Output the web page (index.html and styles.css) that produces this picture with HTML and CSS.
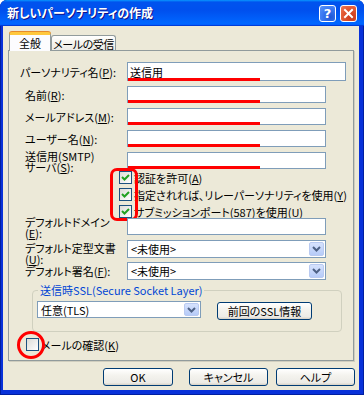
FILE: index.html
```html
<!DOCTYPE html>
<html lang="ja">
<head>
<meta charset="utf-8">
<title>新しいパーソナリティの作成</title>
<link rel="stylesheet" href="styles.css">
</head>
<body>
<div class="window">
  <div class="titlebar">
    <span class="title">新しいパーソナリティの作成</span>
    <span class="tb-btn tb-help">?</span>
    <span class="tb-btn tb-close"><svg width="11" height="11" viewBox="0 0 11 11"><path d="M2 2 L9 9 M9 2 L2 9" stroke="#fff" stroke-width="2" stroke-linecap="square"/></svg></span>
  </div>
  <div class="client">
    <div class="tabs">
      <div class="tab tab-active">全般</div>
      <div class="tab">メールの受信</div>
    </div>
    <div class="panel">
      <div class="row row-1">
        <span class="lbl lbl-first">パーソナリティ名(<u>P</u>):</span>
        <div class="field field-wide"><span class="val">送信用</span><span class="mark"></span></div>
      </div>
      <div class="row row-n">
        <span class="lbl">名前(<u>R</u>):</span>
        <div class="field"><span class="mark"></span></div>
      </div>
      <div class="row row-n">
        <span class="lbl">メールアドレス(<u>M</u>):</span>
        <div class="field"><span class="mark"></span></div>
      </div>
      <div class="row row-n">
        <span class="lbl">ユーザー名(<u>N</u>):</span>
        <div class="field"><span class="mark"></span></div>
      </div>
      <div class="row row-n">
        <span class="lbl lbl-2 lbl-up">送信用(SMTP)<br>サーバ(<u>S</u>):</span>
        <div class="field"><span class="mark"></span></div>
      </div>
      <div class="checks">
        <div class="check"><span class="cb"><svg width="11" height="11" viewBox="0 0 11 11"><polyline points="2,5 4.5,7.5 9,3" fill="none" stroke="#21A121" stroke-width="2"/></svg></span><span>認証を許可(<u>A</u>)</span></div>
        <div class="check"><span class="cb"><svg width="11" height="11" viewBox="0 0 11 11"><polyline points="2,5 4.5,7.5 9,3" fill="none" stroke="#21A121" stroke-width="2"/></svg></span><span>指定されれば、リレーパーソナリティを使用(<u>Y</u>)</span></div>
        <div class="check"><span class="cb"><svg width="11" height="11" viewBox="0 0 11 11"><polyline points="2,5 4.5,7.5 9,3" fill="none" stroke="#21A121" stroke-width="2"/></svg></span><span>サブミッションポート(587)を使用(<u>U</u>)</span></div>
        <span class="redbox"></span>
      </div>
      <div class="row row-dom">
        <span class="lbl lbl-2">デフォルトドメイン<br>(<u>E</u>):</span>
        <div class="field"></div>
      </div>
      <div class="row row-sel1">
        <span class="lbl lbl-2 lbl-down">デフォルト定型文書<br>(<u>U</u>):</span>
        <div class="field select"><span class="val">&lt;未使用&gt;</span><span class="arrow"><svg width="9" height="6" viewBox="0 0 9 6"><polyline points="1,1 4.5,4.5 8,1" fill="none" stroke="#4D6185" stroke-width="2"/></svg></span></div>
      </div>
      <div class="row row-sel2">
        <span class="lbl">デフォルト署名(<u>F</u>):</span>
        <div class="field select"><span class="val">&lt;未使用&gt;</span><span class="arrow"><svg width="9" height="6" viewBox="0 0 9 6"><polyline points="1,1 4.5,4.5 8,1" fill="none" stroke="#4D6185" stroke-width="2"/></svg></span></div>
      </div>
      <fieldset class="group">
        <legend>送信時SSL(Secure Socket Layer)</legend>
        <div class="group-row">
          <div class="field select select-ssl"><span class="val">任意(TLS)</span><span class="arrow"><svg width="9" height="6" viewBox="0 0 9 6"><polyline points="1,1 4.5,4.5 8,1" fill="none" stroke="#4D6185" stroke-width="2"/></svg></span></div>
          <span class="btn btn-ssl">前回のSSL情報</span>
        </div>
      </fieldset>
      <div class="check check-mail"><span class="cb"></span><span>メールの確認(<u>K</u>)</span><span class="redcircle"></span></div>
    </div>
    <div class="buttons">
      <span class="btn btn-ok">OK</span>
      <span class="btn btn-cancel">キャンセル</span>
      <span class="btn btn-help">ヘルプ</span>
    </div>
  </div>
</div>
</body>
</html>
```
FILE: styles.css
```css
* { box-sizing: border-box; }
html, body { margin: 0; padding: 0; }
body {
  width: 364px;
  height: 395px;
  overflow: hidden;
  background: #fff;
  font-family: "Noto Sans CJK JP", "Noto Sans", sans-serif;
  font-size: 11px;
  line-height: 12px;
  font-feature-settings: "palt";
  color: #000;
}
u { text-decoration: underline; text-underline-offset: 1px; }

.window {
  width: 364px;
  height: 395px;
  background: #0831D9;
  border-radius: 7px 7px 0 0;
  display: flex;
  flex-direction: column;
  box-shadow: inset 0 0 0 1px #001EA0;
}
.titlebar {
  height: 26px;
  flex: none;
  display: flex;
  align-items: center;
  padding: 0 7px 0 7px;
  border-radius: 7px 7px 0 0;
  background: linear-gradient(180deg, #0997ff, #0053ee 8%, #0050ee 40%, #0066ff 88%, #0066ff 93%, #005bff 95%, #003dd7 96%, #003dd7);
}
.title {
  flex: 1;
  color: #fff;
  font-weight: bold;
  font-size: 12px;
  text-shadow: 1px 1px #0F1089;
}
.tb-btn {
  width: 17px;
  height: 17px;
  border: 1px solid #fff;
  border-radius: 3px;
  display: flex;
  align-items: center;
  justify-content: center;
  color: #fff;
  font-family: "DejaVu Sans", sans-serif;
  font-weight: bold;
  font-size: 13px;
  line-height: 15px;
}
.tb-help {
  background: radial-gradient(circle at 70% 75%, #1F56D6, #3D7CF4 60%, #5C95F8);
  margin-right: 4px;
}
.tb-close {
  background: radial-gradient(circle at 70% 75%, #C9371A, #E35A33 60%, #EE7A58);
}

.client {
  flex: 1;
  margin: 0 5px 5px 3px;
  background: #ECE9D8;
  padding: 6px 5px 0 5px;
  display: flex;
  flex-direction: column;
}
.tabs {
  display: flex;
  align-items: flex-end;
  height: 18px;
  margin-left: 1px;
}
.tab {
  height: 15px;
  width: 65px;
  border: 1px solid #919B9C;
  border-bottom: none;
  border-radius: 3px 3px 0 0;
  background: linear-gradient(#FFFFFF, #F3F2EC 60%, #ECEBE6);
  display: flex;
  align-items: center;
  justify-content: center;
  padding-top: 1px;
  white-space: nowrap;
  letter-spacing: -0.4px;
  overflow: hidden;
}
.tab-active {
  position: relative;
  z-index: 1;
  width: 42px;
  height: 19px;
  margin-bottom: -1px;
  background: #FCFCFE;
  border-top: 3px solid #FFC83C;
  box-shadow: 0 -1px 0 #E68B2C;
  padding-top: 0;
  letter-spacing: 0;
}

.panel {
  height: 311px;
  border: 1px solid #919B9C;
  box-shadow: 1px 1px 0 #D0CEBF;
  background: #ECE9D8;
  display: flex;
  flex-direction: column;
  padding-left: 16px;
}
.row {
  display: flex;
  align-items: center;
  height: 17px;
}
.row-1 { margin-top: 11px; height: 19px; }
.row-n { margin-top: 5px; }
.row-dom { margin-top: 0; align-items: flex-start; }
.row-sel1 { margin-top: 5px; height: 18px; align-items: flex-start; }
.row-sel2 { margin-top: 4px; height: 18px; }

.lbl {
  width: 102px;
  flex: none;
  white-space: nowrap;
}
.lbl-first { width: 107px; margin-left: -5px; }
.lbl-2 { line-height: 11px; align-self: flex-start; margin-top: -1px; }
.lbl-up { margin-top: -1px; }
.lbl-down { margin-top: 3px; }

.field {
  position: relative;
  width: 199px;
  height: 17px;
  border: 1px solid #7F9DB9;
  background: #fff;
  display: flex;
  align-items: center;
  padding-left: 2px;
}
.row-1 .field { height: 19px; }
.field-wide { width: 219px; }
.mark {
  position: absolute;
  left: 0;
  bottom: -1px;
  width: 132px;
  height: 3px;
  background: #FF0000;
}
.select { height: 18px; padding-left: 3px; }
.arrow {
  position: absolute;
  right: 1px;
  top: 1px;
  bottom: 1px;
  width: 15px;
  border: 1px solid #B9CAF1;
  border-radius: 2px;
  background: linear-gradient(#D6E2FD, #B6CBF8);
  display: flex;
  align-items: center;
  justify-content: center;
}

.checks {
  position: relative;
  margin-top: 2px;
  margin-left: 94px;
  display: flex;
  flex-direction: column;
  gap: 4px;
}
.check {
  display: flex;
  align-items: center;
  gap: 2px;
  height: 13px;
  white-space: nowrap;
}
.cb {
  width: 13px;
  height: 13px;
  flex: none;
  border: 1px solid #1C5180;
  background: linear-gradient(135deg, #DCDCD7, #FFFFFF);
  display: flex;
  align-items: center;
  justify-content: center;
}
.redbox {
  position: absolute;
  left: -9px;
  top: -3px;
  width: 28px;
  height: 53px;
  border: 3px solid #FF0000;
  border-radius: 7px;
}

.group {
  margin: 4px 0 0 7px;
  width: 310px;
  padding: 5px 4px 11px 4px;
  border: 1px solid #D0D0BF;
  border-radius: 4px;
  min-inline-size: 0;
}
.group legend {
  color: #0046D5;
  padding: 0 2px;
  margin-left: 1px;
  line-height: 12px;
}
.group-row {
  display: flex;
  align-items: flex-start;
  gap: 16px;
}
.select-ssl { width: 164px; height: 17px; }

.btn {
  height: 18px;
  border: 1px solid #003C74;
  border-radius: 3px;
  background: linear-gradient(#FFFFFF, #F4F3EE 40%, #ECEBE6 86%, #D6D0C5);
  display: flex;
  align-items: center;
  justify-content: center;
  flex: none;
}
.btn-ssl { width: 95px; margin-top: 1px; }

.check-mail {
  position: relative;
  margin-top: 6px;
  margin-left: 1px;
}
.redcircle {
  position: absolute;
  left: -9px;
  top: -7px;
  width: 28px;
  height: 28px;
  border: 3px solid #FF0000;
  border-radius: 50%;
}

.buttons {
  display: flex;
  justify-content: flex-end;
  margin-top: 7px;
  margin-right: -1px;
}
.btn-ok { width: 70px; margin-right: 16px; }
.btn-cancel { width: 79px; margin-right: 8px; }
.btn-help { width: 79px; }
```
